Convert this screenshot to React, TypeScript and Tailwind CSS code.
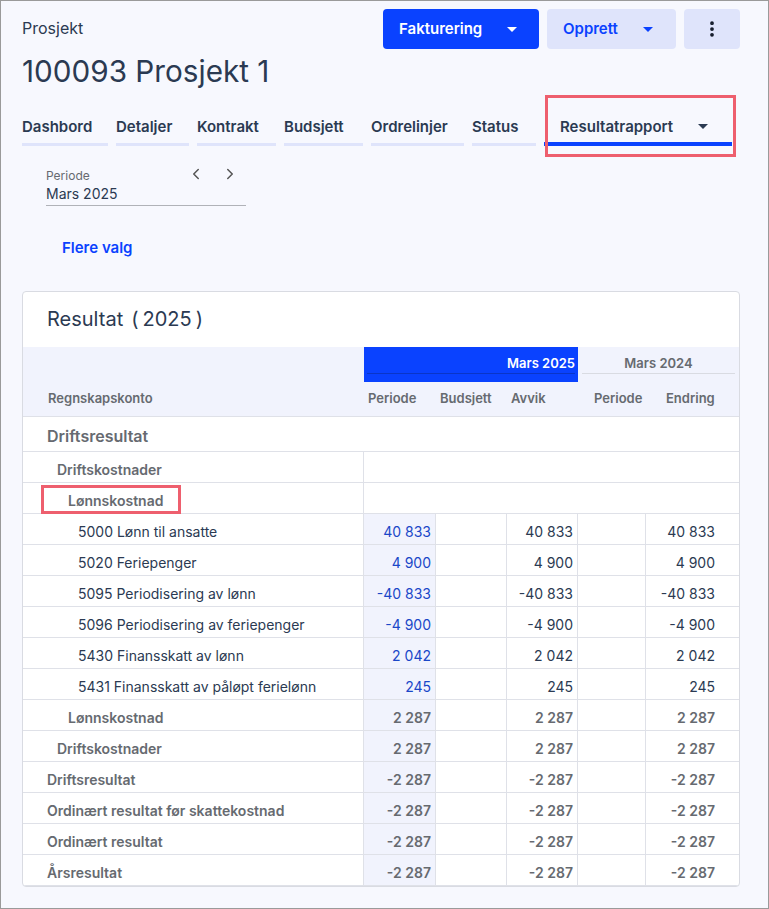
import { ChevronLeft, ChevronRight, EllipsisVertical } from 'lucide-react';

const gridCols = 'grid grid-cols-[341px_72px_71px_71px_68px_93px]';

const tabs = [
  { label: 'Dashbord', width: 'w-[86px]' },
  { label: 'Detaljer', width: 'w-[73px]' },
  { label: 'Kontrakt', width: 'w-[79px]' },
  { label: 'Budsjett', width: 'w-[79px]' },
  { label: 'Ordrelinjer', width: 'w-[93px]' },
  { label: 'Status', width: 'w-[64px]' },
];

const accounts = [
  { name: '5000 Lønn til ansatte', value: '40 833' },
  { name: '5020 Feriepenger', value: '4 900' },
  { name: '5095 Periodisering av lønn', value: '-40 833' },
  { name: '5096 Periodisering av feriepenger', value: '-4 900' },
  { name: '5430 Finansskatt av lønn', value: '2 042' },
  { name: '5431 Finansskatt av påløpt ferielønn', value: '245' },
];

const totals = [
  { name: 'Lønnskostnad', value: '2 287', indent: 'pl-[45px]' },
  { name: 'Driftskostnader', value: '2 287', indent: 'pl-[34px]' },
  { name: 'Driftsresultat', value: '-2 287', indent: 'pl-6' },
  { name: 'Ordinært resultat før skattekostnad', value: '-2 287', indent: 'pl-6' },
  { name: 'Ordinært resultat', value: '-2 287', indent: 'pl-6' },
  { name: 'Årsresultat', value: '-2 287', indent: 'pl-6' },
];

function Caret({ className }: { className: string }) {
  return <span className={`h-0 w-0 border-x-[5px] border-t-[5px] border-x-transparent ${className}`} />;
}

function Cell({ children, className = '' }: { children?: React.ReactNode; className?: string }) {
  return (
    <div className={`flex items-center justify-end border-r border-[#dfe1e8] pr-[4px] pt-1 ${className}`}>
      {children}
    </div>
  );
}

function AmountRow({
  name,
  value,
  indent,
  bold,
}: {
  name: string;
  value: string;
  indent: string;
  bold?: boolean;
}) {
  const text = bold ? 'font-semibold text-[#666a70]' : 'text-[#2b3a52]';
  return (
    <div className={`${gridCols} h-[31px] border-b border-[#dfe1e8] text-[14px] last:h-[30px] last:border-b-0 ${text}`}>
      <div className={`flex items-center border-r border-[#dfe1e8] pt-1 ${indent}`}>{name}</div>
      <Cell className={`bg-[#f1f3fd] ${bold ? '' : 'text-[#1a47c8]'}`}>{value}</Cell>
      <Cell />
      <Cell>{value}</Cell>
      <Cell />
      <div className="flex items-center justify-end pr-6 pt-1">{value}</div>
    </div>
  );
}

function ResultTable() {
  return (
    <div className="relative mt-[33px] w-[718px] overflow-hidden rounded-[4px] border border-[#d9dbe2] bg-white">
      <h2 className="flex h-[55px] items-center pb-[2px] pl-6 text-[20px] text-[#2b3a52]">
        Resultat<span className="ml-2">(</span>
        <span className="mx-[4px]">2025</span>)
      </h2>

      <div className="border-b border-[#dfe1e8] bg-[#f1f3fd] text-[13px] font-semibold text-[#666a70]">
        <div className={`${gridCols} h-[35px]`}>
          <div />
          <div className="col-span-3 flex h-full flex-col bg-[#0a42ff] px-[3px] text-white">
            <div className="flex h-[27px] items-end justify-end border-b border-[#0a35c8]">Mars 2025</div>
          </div>
          <div className="col-span-2 px-1">
            <div className="flex h-[27px] items-end justify-center border-b border-[#d9dbe2]">Mars 2024</div>
          </div>
        </div>
        <div className={`${gridCols} h-[34px] items-center`}>
          <div className="pl-[25px]">Regnskapskonto</div>
          <div className="pl-1">Periode</div>
          <div className="pl-1">Budsjett</div>
          <div className="pl-1">Avvik</div>
          <div className="pl-4">Periode</div>
          <div className="pl-5">Endring</div>
        </div>
      </div>

      <div className="flex h-[35px] items-center border-b border-[#dfe1e8] pl-6 pt-1 text-[16px] font-semibold text-[#666a70]">
        Driftsresultat
      </div>
      <div className={`${gridCols} h-[31px] border-b border-[#dfe1e8] text-[14px] font-semibold text-[#666a70]`}>
        <div className="flex items-center border-r border-[#dfe1e8] pl-[34px] pt-1">Driftskostnader</div>
      </div>
      <div className={`${gridCols} h-[31px] border-b border-[#dfe1e8] text-[14px] font-semibold text-[#666a70]`}>
        <div className="flex items-center border-r border-[#dfe1e8] pl-[45px] pt-1">Lønnskostnad</div>
      </div>

      {accounts.map((row) => (
        <AmountRow key={row.name} name={row.name} value={row.value} indent="pl-[55px]" />
      ))}
      {totals.map((row) => (
        <AmountRow key={row.name} name={row.name} value={row.value} indent={row.indent} bold />
      ))}

      {/* annotation round the row label */}
      <div className="absolute left-[18px] top-[193px] h-[29px] w-[140px] border-[3px] border-[#ee5f6e]" />
    </div>
  );
}

export default function App() {
  return (
    <div className="relative h-[909px] w-[769px] border border-[#9a9a9a] bg-[#f7f8fe] font-['Inter','Noto_Sans',sans-serif] text-[#2b3a52]">
      <div className="px-[21px] pt-[8px]">
        <div className="flex items-start justify-between pr-[7px]">
          <div className="pt-[7px] text-[16px]">Prosjekt</div>
          <div className="flex gap-2 text-[15px] font-semibold">
            <button className="flex h-10 w-[156px] items-center gap-[25px] rounded-[4px] bg-[#0a42ff] pl-4 text-white">
              Fakturering
              <Caret className="border-t-white" />
            </button>
            <button className="flex h-10 w-[129px] items-center gap-[25px] rounded-[4px] bg-[#dfe4fb] pl-4 text-[#0a42ff]">
              Opprett
              <Caret className="border-t-[#0a42ff]" />
            </button>
            <button className="flex h-10 w-14 items-center justify-center rounded-[4px] bg-[#dfe4fb] text-[#111827]">
              <EllipsisVertical size={20} strokeWidth={2.5} />
            </button>
          </div>
        </div>

        <h1 className="mt-[4px] h-[37px] text-[29.7px] leading-9 text-[#2b3a52]">100093 Prosjekt 1</h1>

        <div className="mt-[22px] flex gap-2 text-[15px] font-semibold">
          {tabs.map((tab) => (
            <div key={tab.label} className={`h-[34px] ${tab.width} border-b-[3px] border-[#dfe4fb] pt-1`}>
              {tab.label}
            </div>
          ))}
          <div className="flex h-[34px] w-[188px] items-start gap-[25px] border-b-4 border-[#0a42ff] pl-4 pt-1">
            Resultatrapport
            <Caret className="mt-[8px] border-t-[#2b3a52]" />
          </div>
        </div>

        <div className="relative ml-6 mt-[22px] w-[200px] border-b border-[#b0b2b8] pb-[1px]">
          <div className="text-[12px] leading-4 text-[#666a70]">Periode</div>
          <div className="text-[14px] leading-5">Mars 2025</div>
          <div className="absolute right-[7px] top-[-3px] flex gap-4 text-[#555]">
            <ChevronLeft size={18} />
            <ChevronRight size={18} />
          </div>
        </div>

        <div className="ml-10 mt-[32px] text-[15px] font-semibold leading-5 text-[#0a42ff]">Flere valg</div>

        <ResultTable />
      </div>

      {/* annotation round the active tab */}
      <div className="absolute left-[544px] top-[94px] h-[62px] w-[191px] border-[3px] border-[#ee5f6e]" />
    </div>
  );
}
